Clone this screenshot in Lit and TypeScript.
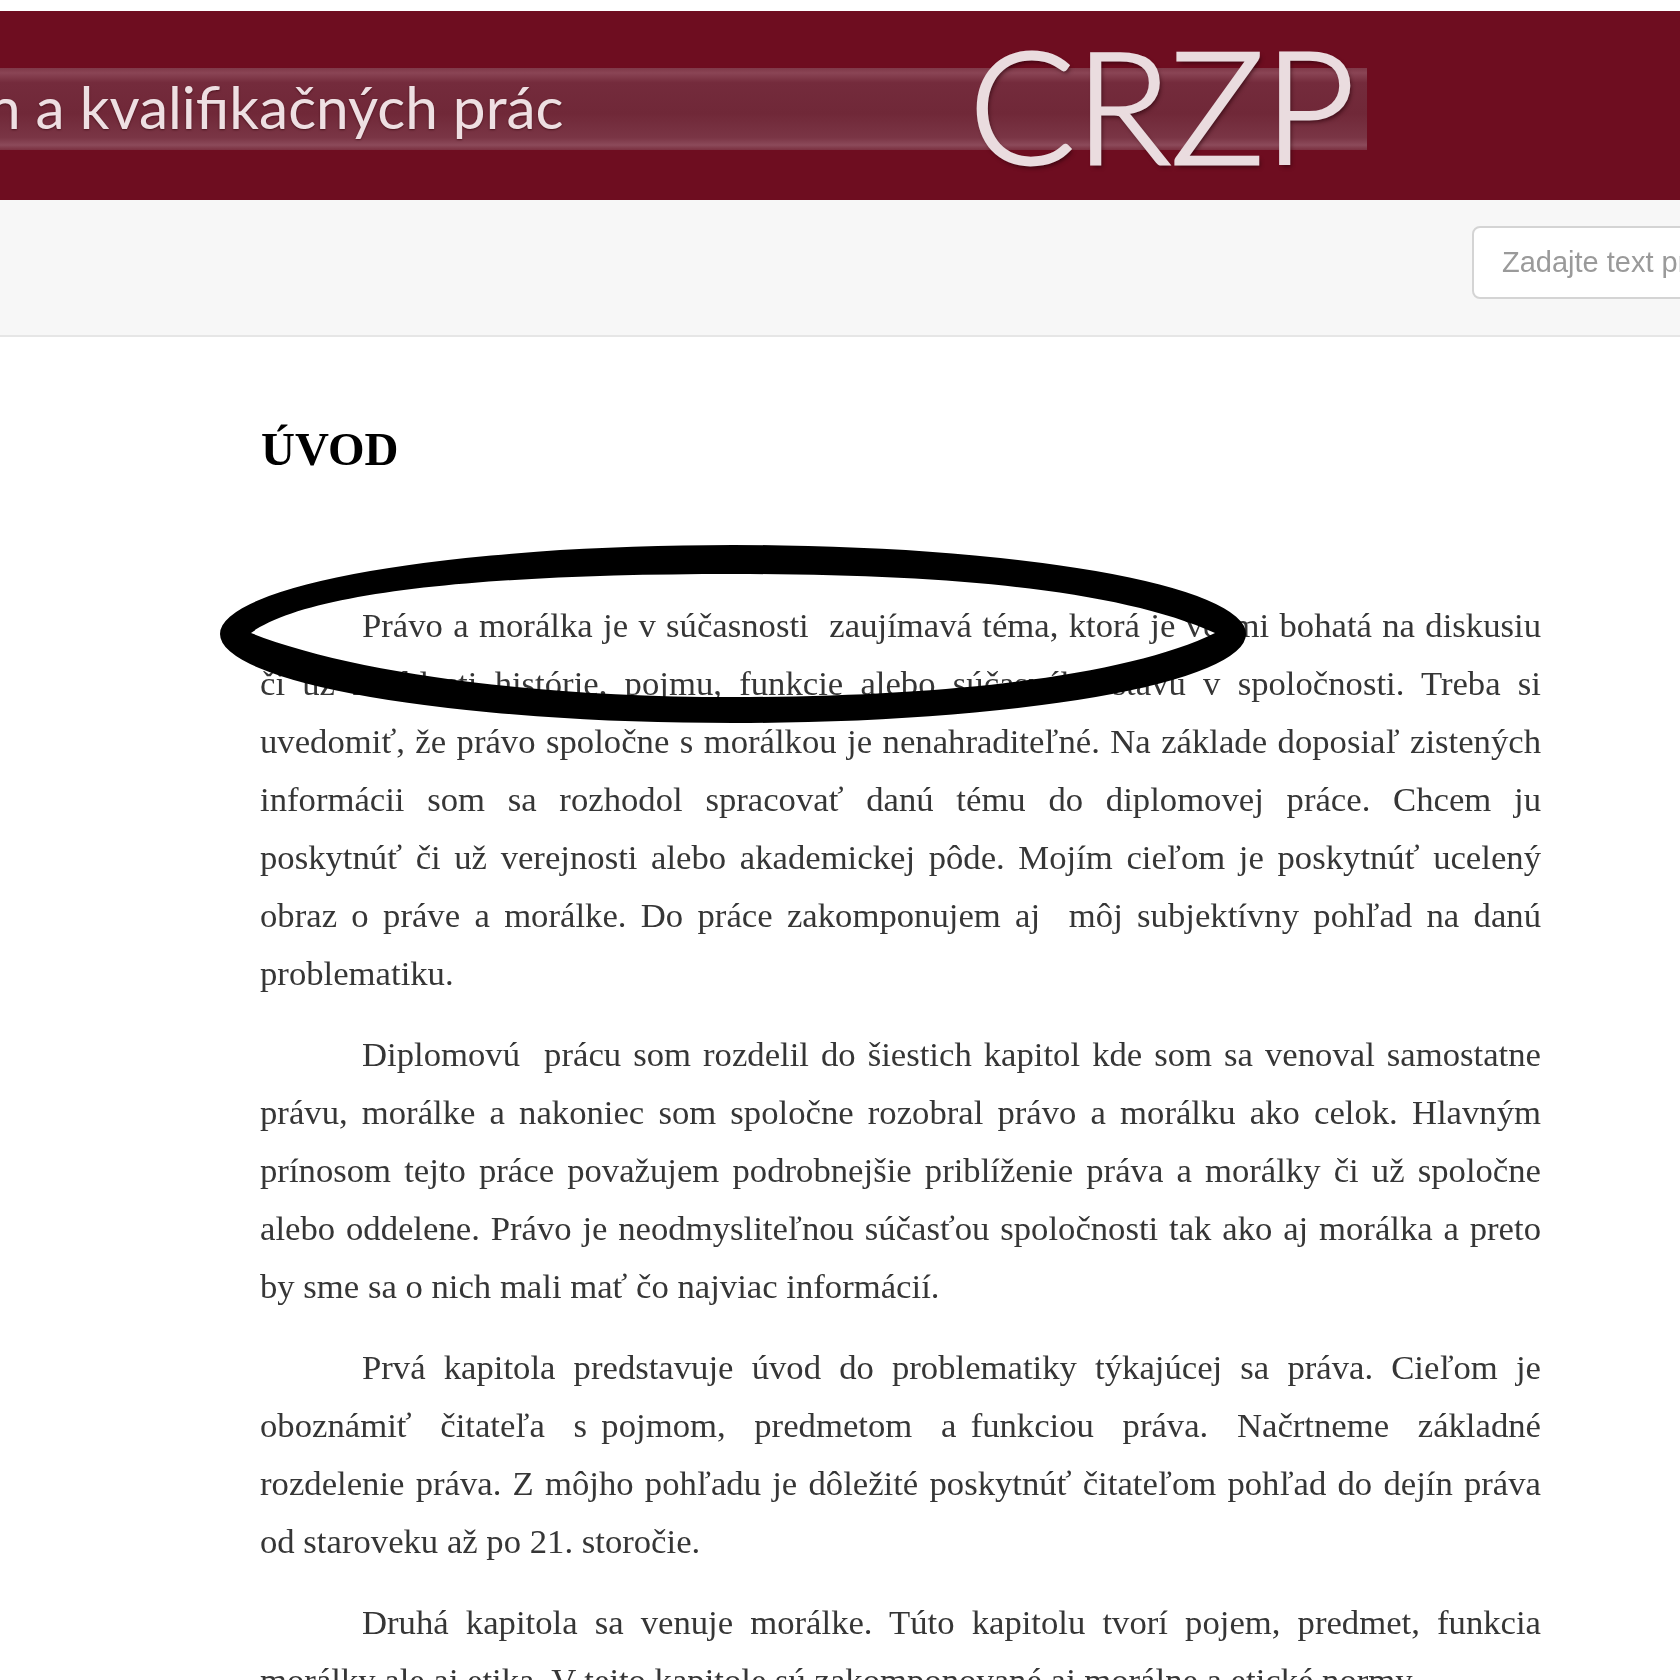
import { LitElement, html, css } from "lit";
import { customElement } from "lit/decorators.js";

type Para = { lines: string[] };

const PARAS: Para[] = [
  {
    lines: [
      "Právo a morálka je v súčasnosti  zaujímavá téma, ktorá je veľmi bohatá na diskusiu",
      "či už z oblasti histórie, pojmu, funkcie alebo súčasného stavu v spoločnosti. Treba si",
      "uvedomiť, že právo spoločne s morálkou je nenahraditeľné. Na základe doposiaľ zistených",
      "informácii som sa rozhodol spracovať danú tému do diplomovej práce. Chcem ju",
      "poskytnúť či už verejnosti alebo akademickej pôde. Mojím cieľom je poskytnúť ucelený",
      "obraz o práve a morálke. Do práce zakomponujem aj  môj subjektívny pohľad na danú",
      "problematiku.",
    ],
  },
  {
    lines: [
      "Diplomovú  prácu som rozdelil do šiestich kapitol kde som sa venoval samostatne",
      "právu, morálke a nakoniec som spoločne rozobral právo a morálku ako celok. Hlavným",
      "prínosom tejto práce považujem podrobnejšie priblíženie práva a morálky či už spoločne",
      "alebo oddelene. Právo je neodmysliteľnou súčasťou spoločnosti tak ako aj morálka a preto",
      "by sme sa o nich mali mať čo najviac informácií.",
    ],
  },
  {
    lines: [
      "Prvá kapitola predstavuje úvod do problematiky týkajúcej sa práva. Cieľom je",
      "oboznámiť  čitateľa  s pojmom,  predmetom  a funkciou  práva.  Načrtneme  základné",
      "rozdelenie práva. Z môjho pohľadu je dôležité poskytnúť čitateľom pohľad do dejín práva",
      "od staroveku až po 21. storočie.",
    ],
  },
  {
    lines: [
      "Druhá kapitola sa venuje morálke. Túto kapitolu tvorí pojem, predmet, funkcia",
      "morálky ale aj etika. V tejto kapitole sú zakomponované aj morálne a etické normy.",
    ],
  },
];

@customElement("app-root")
export class AppRoot extends LitElement {
  static styles = css`
    :host {
      display: block;
      position: relative;
      width: 1680px;
      height: 1680px;
      overflow: hidden;
      background: #fff;
      padding-top: 11px;
      box-sizing: border-box;
    }
    .banner {
      height: 189px;
      background: #6e0d20;
      box-sizing: border-box;
      padding-top: 57px;
    }
    .band {
      width: 1367px;
      height: 82px;
      display: flex;
      align-items: center;
      justify-content: space-between;
      background: linear-gradient(
        180deg,
        #7f3848 0%,
        #8a4555 6%,
        #742b3c 18%,
        #702838 55%,
        #7a3545 85%,
        #8c4a5a 94%,
        #7a3040 100%
      );
    }
    .tag {
      font-family: "Lato", "Open Sans", sans-serif;
      font-weight: 400;
      font-size: 58.5px;
      line-height: 82px;
      color: #eedfe2;
      white-space: nowrap;
      margin-left: -12px;
      margin-bottom: 6px;
      filter: blur(0.5px);
      text-shadow: 0 1px 2px rgba(50, 0, 10, 0.6);
    }
    .logo {
      font-family: "Lato", "Open Sans", sans-serif;
      font-weight: 300;
      font-size: 157px;
      line-height: 82px;
      color: #eadcdf;
      -webkit-text-stroke: 3px #eadcdf;
      margin-right: 12px;
      margin-bottom: 13px;
      filter: blur(0.6px);
      text-shadow: 2px 3px 4px rgba(40, 0, 10, 0.7);
    }
    .search {
      height: 135px;
      background: #f7f7f7;
      border-bottom: 2px solid #e6e6e6;
      box-sizing: content-box;
      display: flex;
      align-items: center;
      padding-left: 1472px;
    }
    .search input {
      flex: none;
      width: 300px;
      height: 73px;
      margin-top: -11px;
      box-sizing: border-box;
      background: #fff;
      border: 2px solid #d4d4d4;
      border-radius: 8px;
      padding: 0 28px;
      font-family: "Liberation Sans", sans-serif;
      font-size: 29px;
      outline: none;
      filter: blur(0.4px);
    }
    .search input::placeholder {
      color: #9a9a9a;
      opacity: 1;
    }
    .doc {
      padding: 87px 139px 0 260px;
      font-family: "Liberation Serif", "Times New Roman", serif;
      color: #363636;
      filter: blur(0.55px);
    }
    h1 {
      margin: 0 0 123px 1px;
      font-size: 47px;
      line-height: 50px;
      font-weight: 700;
      color: #000;
    }
    p {
      margin: 0 0 23px;
    }
    .line {
      display: block;
      font-size: 34.7px;
      line-height: 58px;
      height: 58px;
      white-space: pre-wrap;
      text-align: justify;
      text-align-last: justify;
    }
    .line.first {
      padding-left: 102px;
    }
    .line.end {
      text-align-last: left;
    }
    .mark {
      position: absolute;
      left: 0;
      top: 0;
      width: 1680px;
      height: 1680px;
      pointer-events: none;
      filter: blur(0.5px);
    }
  `;

  render() {
    return html`
      <header class="banner">
        <div class="band">
          <span class="tag">n a kvalifikačných prác</span>
          <span class="logo">CRZP</span>
        </div>
      </header>
      <div class="search">
        <input type="text" placeholder="Zadajte text pre vyhľadávanie" />
      </div>
      <main class="doc">
        <h1>ÚVOD</h1>
        ${PARAS.map(
          (p) => html`<p>
            ${p.lines.map((l, i) => {
              const cls = [
                "line",
                i === 0 ? "first" : "",
                i === p.lines.length - 1 ? "end" : "",
              ].join(" ");
              return html`<span class=${cls}>${l}</span>`;
            })}
          </p>`
        )}
      </main>
      <svg class="mark" viewBox="0 0 1680 1680" aria-hidden="true">
        <path
          fill="#000"
          fill-rule="evenodd"
          d="M220 634 A513 89 0 0 1 1246 634 A513 89 0 0 1 220 634 Z
             M251 633 C350 672 530 697 733 697 C950 697 1130 675 1215 633 C1120 590 950 574 733 574 C500 574 310 590 251 633 Z"
        />
      </svg>
    `;
  }
}
